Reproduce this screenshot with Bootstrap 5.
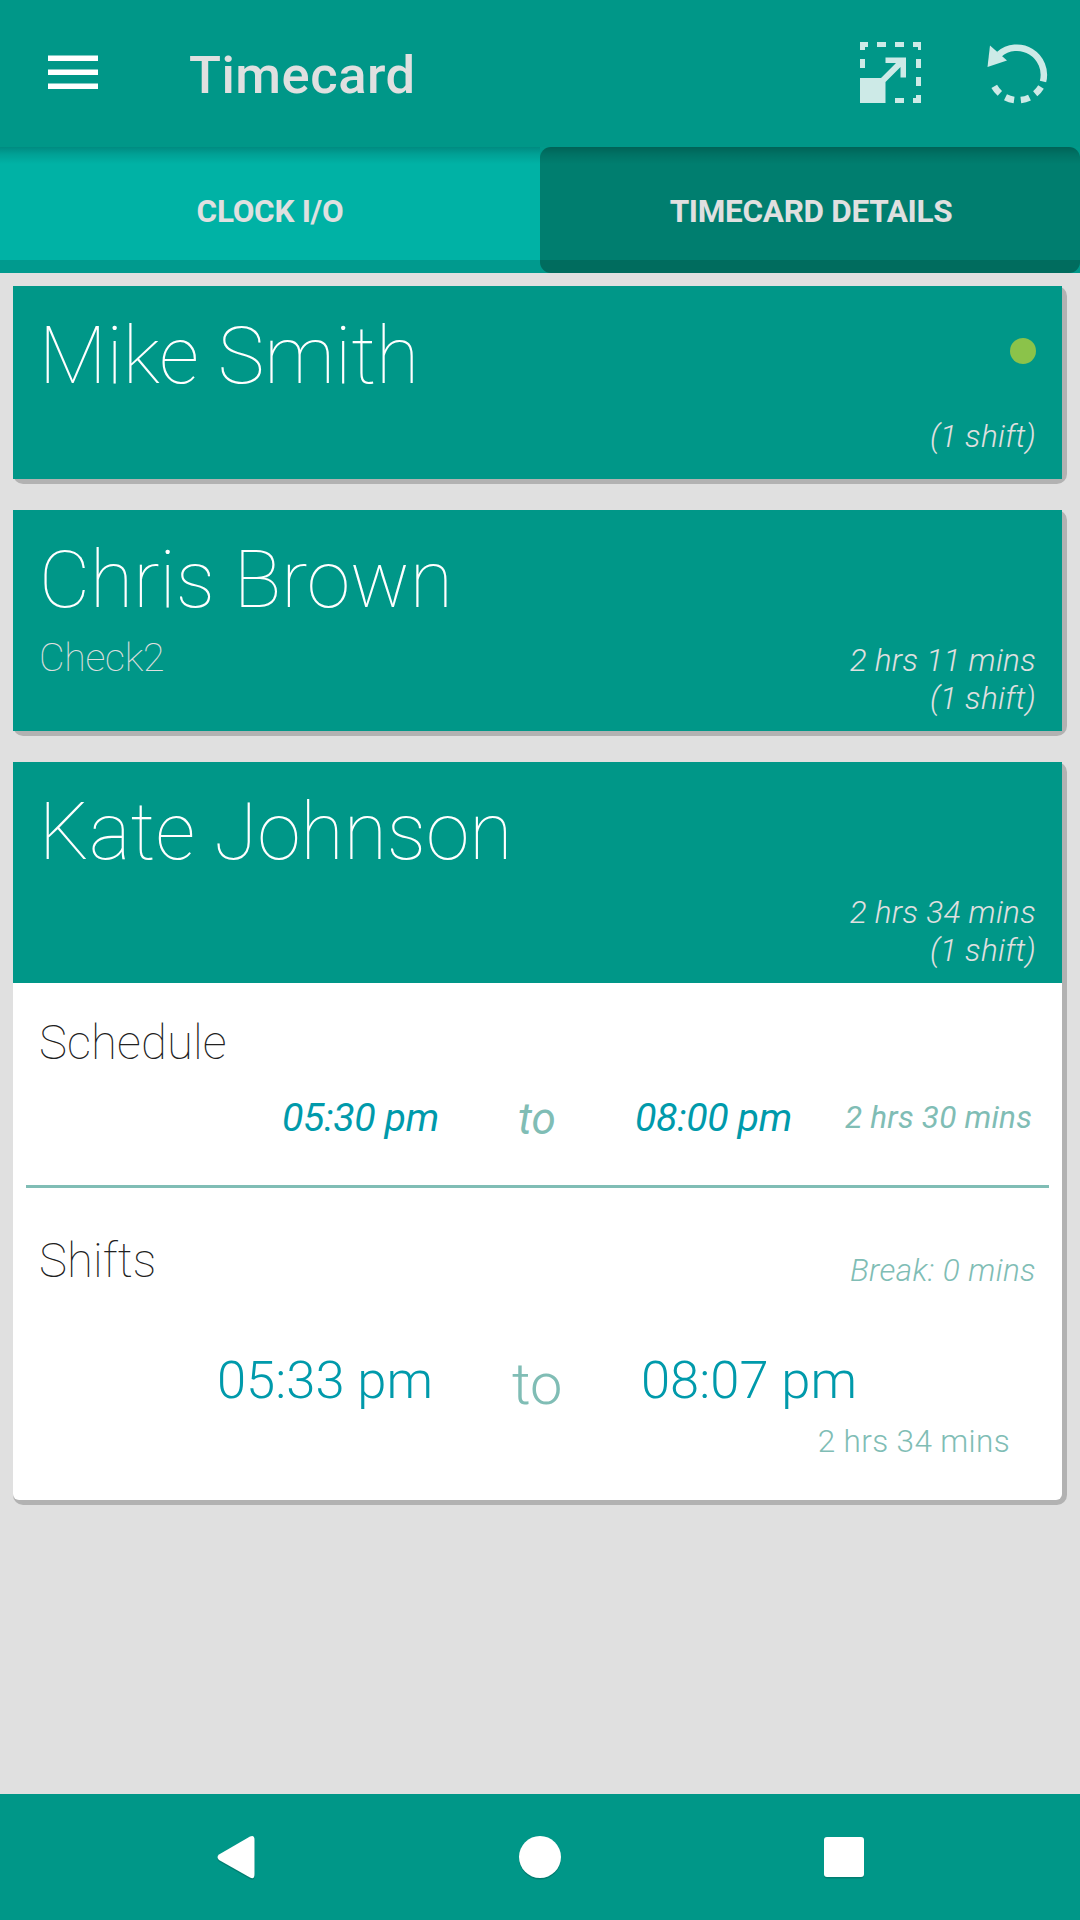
<!DOCTYPE html>
<html lang="en">
<head>
<meta charset="utf-8">
<meta name="viewport" content="width=device-width, initial-scale=1">
<title>Timecard</title>
<link href="https://cdn.jsdelivr.net/npm/bootstrap@5.3.0/dist/css/bootstrap.min.css" rel="stylesheet">
<style>
body{font-family:Roboto,sans-serif;background:#e0e0e0;color:#212121;line-height:1;width:1080px;height:1920px;overflow:hidden}
.app-header{height:147px;background:#009788;padding:0 31px 0 40px;flex:none}
.menu-icon{margin-top:-1px}
.app-title{font-size:52.5px;font-weight:500;letter-spacing:.5px;color:#e0e0e0;margin-left:83px;line-height:62px;padding-top:3px}
.header-tools{gap:65px;margin-top:-1px}
.tab-strip{height:126px;background:#00998a;flex:none}
.tab-item{font-size:31.5px;font-weight:700;letter-spacing:-.3px;color:#e0e0e0;border:0;padding:3px 0 0;background:linear-gradient(rgba(0,0,0,.22),rgba(0,0,0,.1) 7px,rgba(0,0,0,0) 17px),linear-gradient(#00b2a5 113px,#009a8e 113px)}
.tab-item.active{border-radius:11px;padding-left:2px;background:linear-gradient(rgba(0,0,0,.22),rgba(0,0,0,.1) 7px,rgba(0,0,0,0) 17px),linear-gradient(#007e6f 113px,#006c5e 113px)}
.staff-list{padding:13px;gap:26px}
.staff-card{border:0;border-radius:10px;background:#b2b2b2;padding:0 5px 5px 0}
.staff-head{background:#009788;color:#fff;height:221px;padding:24px 26px 0 26px}
.staff-head.short-head{height:193px}
.staff-name{font-size:78.75px;font-weight:100;line-height:92px}
.staff-role{font-size:39.4px;font-weight:100;line-height:46px;margin-top:9px;letter-spacing:-.3px;color:#e0e0e0}
.staff-note{font-size:31.5px;font-weight:300;font-style:italic;line-height:38px;color:#e0e0e0;letter-spacing:.3px}
.head-side{padding-top:108px}
.head-status{padding-top:28px}
.head-status .staff-note{margin-top:54px}
.status-dot{width:26px;height:26px;background:#8bc34a}
.staff-body{height:517px;padding:0 13px;background:#fff;border-radius:0 0 6px 6px}
.part-title{font-size:47.25px;font-weight:100;line-height:56px;padding-left:13px;letter-spacing:.1px}
.part-first{padding-top:32px}
.clock-color{color:#009aab}
.soft-color{color:#80bdb5}
.part-rule{height:3px;background:#80bdb5}
.sched-row{height:114px;padding:24px 0 0 256px;font-weight:400;white-space:nowrap}
.s-from,.s-until{font-size:39.4px;width:155px;line-height:46px;letter-spacing:-.4px}
.s-to{font-size:44px;line-height:52px;margin:-2px 0 0 81px;width:37px}
.s-until{margin-left:80px}
.s-total{font-size:31.5px;line-height:38px;margin:4px 0 0 55px;letter-spacing:.2px}
.shift-top{padding:45px 13px 0 0}
.brk{font-size:31.5px;font-weight:300;font-style:italic;line-height:38px;padding-top:19px;letter-spacing:.4px}
.shift-row{padding:59px 0 0 191px;font-weight:300;font-size:52.5px;line-height:62px;white-space:nowrap}
.h-from,.h-until{width:216px}
.h-to{font-size:57.75px;width:50px;margin:4px 79px 0 79px}
.h-total{font-size:31.5px;font-weight:300;line-height:38px;padding-right:39px;margin-top:8px;letter-spacing:.36px}
.sys-bar{height:126px;background:#009788;flex:none}
</style>
</head>
<body class="d-flex flex-column">
<header class="app-header d-flex align-items-center">
  <svg class="menu-icon" width="66" height="66" viewBox="0 0 66 66"><path d="M8 15.500h50v5.500H8zM8 29.500h50v5.500H8zM8 43.500h50v5.500H8z" fill="#fff"/></svg>
  <h1 class="app-title mb-0">Timecard</h1>
  <div class="header-tools ms-auto d-flex">
    <svg width="62" height="62" viewBox="0 0 62 62" fill="#cdeae7"><path d="M0 0h8v5h-3v3H0zM17 0h9v5h-9zM35 0h9v5h-9zM53 0h8v8h-3v-3h-5zM0 17h5v9H0zM56 17h5v9h-5zM56 35h5v9h-5zM35 56h9v5h-9zM53 56h3v-3h5v8h-8zM0 36h21L36 21H25.500v-5.500H46v20h-5.500V25L25.500 40V61H0z"/></svg>
    <svg width="62" height="62" viewBox="0 0 62 62"><g fill="none" stroke="#cdeae7" stroke-width="6.500"><path d="M12 12.500A27 27 0 0 1 56 39.500"/><path d="M54 45A27 27 0 0 1 7 44" stroke-dasharray="9 6.800"/></g><path d="M3 3.500L20 18.500L.500 25z" fill="#cdeae7"/></svg>
  </div>
</header>
<nav class="tab-strip d-flex">
  <button class="tab-item w-50">CLOCK I/O</button>
  <button class="tab-item active w-50">TIMECARD DETAILS</button>
</nav>
<main class="staff-list d-flex flex-column flex-fill">
  <section class="staff-card card">
    <div class="staff-head short-head d-flex justify-content-between">
      <div class="staff-name">Mike Smith</div>
      <div class="head-status d-flex flex-column align-items-end">
        <span class="status-dot rounded-circle"></span>
        <span class="staff-note">(1 shift)</span>
      </div>
    </div>
  </section>
  <section class="staff-card card">
    <div class="staff-head d-flex justify-content-between">
      <div><div class="staff-name">Chris Brown</div><div class="staff-role">Check2</div></div>
      <div class="staff-note head-side text-end">2 hrs 11 mins<br>(1 shift)</div>
    </div>
  </section>
  <section class="staff-card card">
    <div class="staff-head d-flex justify-content-between">
      <div class="staff-name">Kate Johnson</div>
      <div class="staff-note head-side text-end">2 hrs 34 mins<br>(1 shift)</div>
    </div>
    <div class="staff-body">
      <div class="part-title part-first">Schedule</div>
      <div class="d-flex align-items-start fst-italic sched-row">
        <span class="clock-color s-from">05:30 pm</span>
        <span class="soft-color s-to">to</span>
        <span class="clock-color s-until">08:00 pm</span>
        <span class="soft-color s-total">2 hrs 30 mins</span>
      </div>
      <div class="part-rule"></div>
      <div class="d-flex justify-content-between shift-top">
        <div class="part-title">Shifts</div>
        <div class="soft-color brk">Break: 0 mins</div>
      </div>
      <div class="d-flex shift-row">
        <span class="clock-color h-from">05:33 pm</span>
        <span class="soft-color h-to">to</span>
        <span class="clock-color h-until">08:07 pm</span>
      </div>
      <div class="soft-color h-total text-end">2 hrs 34 mins</div>
    </div>
  </section>
</main>
<footer class="sys-bar">
  <svg class="d-block" width="1080" height="126" viewBox="0 0 1080 126"><g fill="#007d70" transform="translate(0 1.500)"><path d="M219 60.500L250 42.500Q254.500 40.500 254.500 46V80Q254.500 86 250 83.500L219 66Q216 63 219 60.500z"/><circle cx="540" cy="63" r="21"/><rect x="824" y="43" width="40" height="40" rx="3"/></g><g fill="#fff"><path d="M219 60.500L250 42.500Q254.500 40.500 254.500 46V80Q254.500 86 250 83.500L219 66Q216 63 219 60.500z"/><circle cx="540" cy="63" r="21"/><rect x="824" y="43" width="40" height="40" rx="3"/></g></svg>
</footer>
<script src="https://cdn.jsdelivr.net/npm/bootstrap@5.3.0/dist/js/bootstrap.bundle.min.js"></script>
</body>
</html>
